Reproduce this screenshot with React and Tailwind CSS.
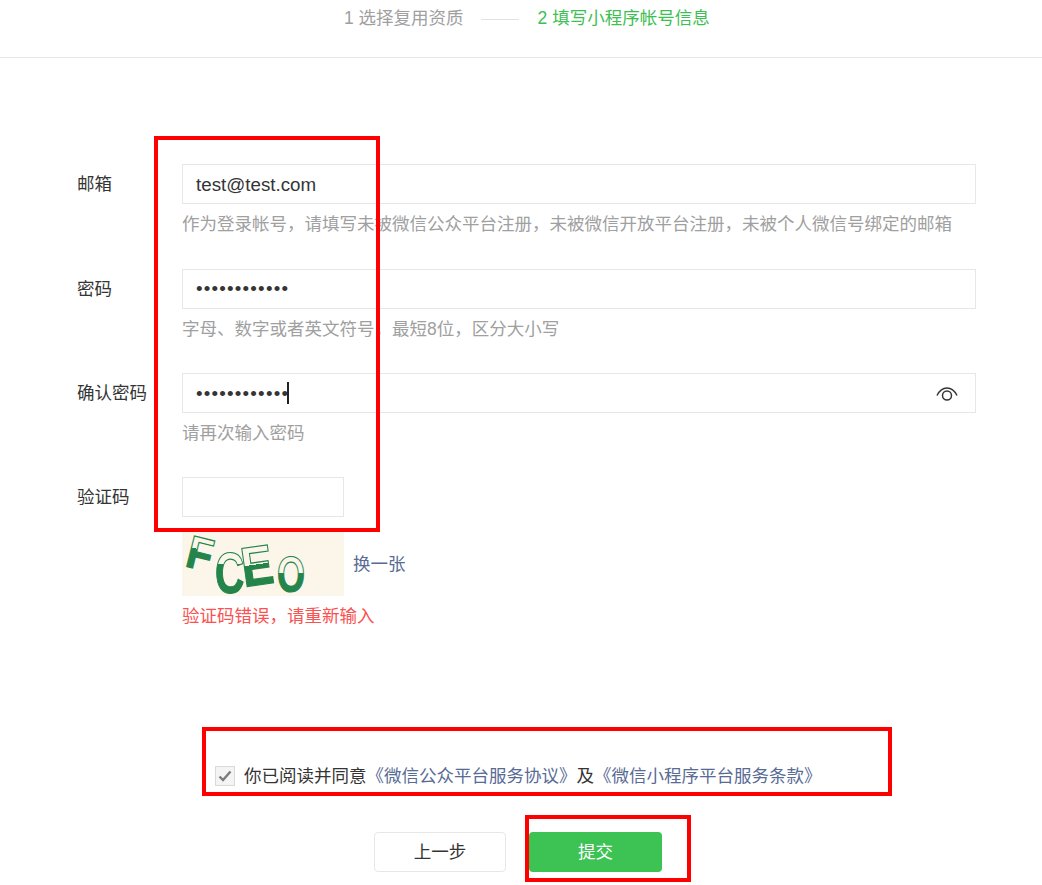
const font = { fontFamily: '"Liberation Sans", "Noto Sans CJK SC", sans-serif' };

function Field({ label, hint, type = "text", value, short, children }) {
  return (
    <div className="flex">
      <label className="w-[105px] h-[40px] leading-[40px] text-[#353535] shrink-0">{label}</label>
      <div className="flex-1 min-w-0">
        <div className={`relative h-[40px] border border-[#e7e7eb] bg-white ${short ? "w-[162px]" : "w-full"}`}>
          <input
            type={type}
            defaultValue={value}
            readOnly
            className={`w-full h-full pl-[13px] pr-[50px] pt-[1px] text-[18.75px] text-[#353535] outline-none bg-transparent ${type === "password" ? "tracking-[1.2px]" : ""}`}
          />
          {children}
        </div>
        {hint && <p className="mt-[8px] h-[24px] leading-[24px] text-[#a0a0a0]">{hint}</p>}
      </div>
    </div>
  );
}

function EyeIcon() {
  return (
    <svg className="absolute right-[16px] top-[10px]" width="24" height="18" viewBox="0 0 24 18" fill="none" stroke="#353535" strokeWidth="1.5">
      <path d="M2 11.5C4.5 6.500 8 4 12 4s7.500 2.500 10 7.500" />
      <circle cx="12" cy="11.500" r="4.500" />
    </svg>
  );
}

function Captcha() {
  return (
    <svg width="162" height="64" viewBox="0 0 162 64" className="bg-[#fbf5ea] block">
      <defs>
        <linearGradient id="fillF" x1="0" y1="0" x2="0" y2="1">
          <stop offset="0.43" stopColor="#fbf5ea" />
          <stop offset="0.43" stopColor="#24844a" />
        </linearGradient>
        <linearGradient id="fillC" x1="0" y1="0" x2="0" y2="1">
          <stop offset="0.36" stopColor="#fbf5ea" />
          <stop offset="0.36" stopColor="#24844a" />
        </linearGradient>
        <linearGradient id="fillE" x1="0" y1="0" x2="0" y2="1">
          <stop offset="0.48" stopColor="#fbf5ea" />
          <stop offset="0.48" stopColor="#24844a" />
        </linearGradient>
        <linearGradient id="fillO" x1="0" y1="0" x2="0" y2="1">
          <stop offset="0.46" stopColor="#fbf5ea" />
          <stop offset="0.46" stopColor="#24844a" />
        </linearGradient>
      </defs>
      <g className="font-bold" stroke="#24844a" strokeWidth="1.200">
        <text x="0" y="0" fontSize="46" fill="url(#fillF)" transform="translate(2 34) rotate(14) scale(0.9 1)">F</text>
        <text x="0" y="0" fontSize="58" fill="url(#fillC)" transform="translate(33 61) scale(0.7 1)">C</text>
        <text x="0" y="0" fontSize="56" fill="url(#fillE)" transform="translate(62 55) rotate(-8) scale(0.85 1)">E</text>
        <text x="0" y="0" fontSize="50" fill="url(#fillO)" transform="translate(95 60) scale(0.72 1)">O</text>
      </g>
    </svg>
  );
}

export default function App() {
  return (
    <div className="relative w-[1042px] h-[885px] overflow-hidden bg-white text-[17.5px]" style={font}>
      <div className="h-[58px] border-b border-[#e7e7eb] pl-[344px] pt-[6px] flex items-start">
        <span className="leading-[24px] text-[#a0a0a0]">1 选择复用资质</span>
        <span className="w-[38px] h-px bg-[#dfe3e8] mt-[13px] ml-[17px] mr-[19px]" />
        <span className="leading-[24px] text-[#3cc051]">2 填写小程序帐号信息</span>
      </div>

      <div className="pl-[77px] pr-[66px] pt-[106.4px] flex flex-col gap-[32.33px]">
        <Field label="邮箱" value="test@test.com" hint="作为登录帐号，请填写未被微信公众平台注册，未被微信开放平台注册，未被个人微信号绑定的邮箱" />
        <Field label="密码" type="password" value="aaaaaaaaaaaa" hint="字母、数字或者英文符号，最短8位，区分大小写" />
        <Field label="确认密码" type="password" value="aaaaaaaaaaaa" hint="请再次输入密码">
          <span className="absolute left-[104px] top-[8px] w-[2px] h-[22px] bg-[#222]" />
          <EyeIcon />
        </Field>
        <Field label="验证码" short />
      </div>

      <div className="pl-[182px] mt-[15px]">
        <div className="flex items-center gap-[9px]">
          <Captcha />
          <a className="text-[#576b95]">换一张</a>
        </div>
        <p className="mt-[8px] leading-[24px] text-[#fa5151]">验证码错误，请重新输入</p>
      </div>

      <div className="flex items-center pl-[215px] mt-[135.6px] h-[24px]">
        <span className="w-[20px] h-[20px] border border-[#d9d9d9] bg-[#f4f4f4] flex items-center justify-center shrink-0">
          <svg width="14" height="12" viewBox="0 0 14 12" fill="none" stroke="#7b7b7b" strokeWidth="2.400">
            <path d="M1.500 6.500 5 10l7.500-8.500" />
          </svg>
        </span>
        <span className="ml-[9px] text-[#353535]">你已阅读并同意</span>
        <a className="text-[#576b95]">《微信公众平台服务协议》</a>
        <span className="text-[#353535]">及</span>
        <a className="text-[#576b95]">《微信小程序平台服务条款》</a>
      </div>

      <div className="flex pl-[374px] gap-[23px] mt-[44px]">
        <button className="w-[132px] h-[40px] rounded-[4px] border border-[#e7e7eb] bg-white text-[#353535]">上一步</button>
        <button className="w-[133px] h-[40px] rounded-[4px] bg-[#3dc254] text-white">提交</button>
      </div>

      <div className="absolute left-[154px] top-[136px] w-[226px] h-[396px] border-[4px] border-[#ff0000]" />
      <div className="absolute left-[202px] top-[727px] w-[690px] h-[69px] border-[4px] border-[#ff0000]" />
      <div className="absolute left-[525px] top-[815px] w-[166px] h-[67px] border-[4px] border-[#ff0000]" />
    </div>
  );
}
